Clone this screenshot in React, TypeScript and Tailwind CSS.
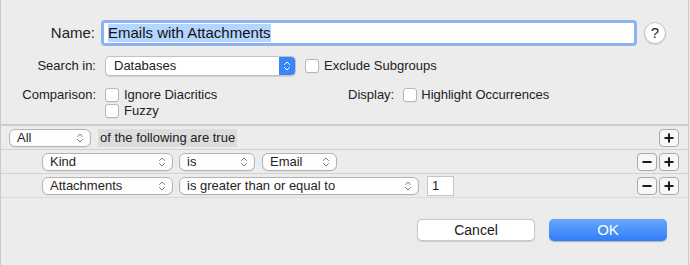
import React from 'react'

const font = "font-['Liberation_Sans',Arial,sans-serif]"

function UpDown({ color = '#7a7a7a' }: { color?: string }) {
  return (
    <svg width="8" height="12" viewBox="0 0 8 12" fill="none">
      <path d="M1.5 4.5 L4 2 L6.5 4.5" stroke={color} strokeWidth="1" strokeLinecap="round" strokeLinejoin="round" />
      <path d="M1.5 7.5 L4 10 L6.5 7.5" stroke={color} strokeWidth="1" strokeLinecap="round" strokeLinejoin="round" />
    </svg>
  )
}

function Popup({ label, className }: { label: string; className: string }) {
  return (
    <div
      className={`flex h-[18px] items-center justify-between rounded-[6px] border border-[#b3b3b3] bg-[#fdfdfd] pl-[7px] pr-[6px] text-[13px] leading-none text-[#1f1f1f] shadow-[0_0.5px_0.5px_rgba(0,0,0,0.1)] ${className}`}
    >
      <span>{label}</span>
      <UpDown />
    </div>
  )
}

function Checkbox() {
  return (
    <div className="h-[14px] w-[14px] shrink-0 rounded-[3px] border border-[#b8b8b8] bg-white shadow-[0_0.5px_0.5px_rgba(0,0,0,0.08)]" />
  )
}

function SquareButton({ kind }: { kind: 'plus' | 'minus' }) {
  return (
    <div className="flex h-[18px] w-[20px] items-center justify-center rounded-[4px] border border-[#a9a9a9] bg-[#f7f7f7]">
      <svg width="10" height="10" viewBox="0 0 10 10">
        <rect x="0.5" y="4" width="9" height="2" fill="#1a1a1a" />
        {kind === 'plus' && <rect x="4" y="0.5" width="2" height="9" fill="#1a1a1a" />}
      </svg>
    </div>
  )
}

export default function App() {
  return (
    <div className={`${font} h-[265px] w-[690px] overflow-hidden bg-[#ececec] text-[#222]`}>
      <div className="flex h-full w-[689px] flex-col border-x border-[#c9c9c9]">
        {/* Name */}
        <div className="mt-[20px] flex h-[26px] items-center">
          <div className="w-[95px] pr-[1px] text-right text-[15px]">Name:</div>
          <div className="ml-[5px] flex h-[26px] w-[536px] items-center rounded-[4px] border-[3px] border-[#8db2f2] bg-white pl-[4px]">
            <span className="bg-[#b4d5fe] text-[15px] leading-[18px] text-[#111]">Emails with Attachments</span>
          </div>
          <div className="ml-[7px] flex h-[22px] w-[22px] items-center justify-center rounded-full border border-[#c4c4c4] bg-white text-[15px] text-[#222] shadow-[0_1px_1px_rgba(0,0,0,0.12)]">
            ?
          </div>
        </div>

        {/* Search in */}
        <div className="mt-[10px] flex h-[20px] items-center text-[13px]">
          <div className="w-[95px] text-right">Search in:</div>
          <div className="ml-[9px] flex h-[20px] w-[191px] items-center justify-between overflow-hidden rounded-[5px] border border-[#c2c2c2] bg-white shadow-[0_0.5px_1px_rgba(0,0,0,0.12)]">
            <span className="pl-[8px]">Databases</span>
            <div className="flex h-full w-[16px] items-center justify-center bg-[#3a86f7]">
              <UpDown color="#ffffff" />
            </div>
          </div>
          <div className="ml-[9px]">
            <Checkbox />
          </div>
          <span className="ml-[5px]">Exclude Subgroups</span>
        </div>

        {/* Comparison / Display */}
        <div className="mt-[11px] flex text-[13px]">
          <div className="flex h-[16px] w-[95px] items-center justify-end">Comparison:</div>
          <div className="ml-[9px] flex w-[243px] flex-col">
            <div className="flex h-[16px] items-center">
              <Checkbox />
              <span className="ml-[5px]">Ignore Diacritics</span>
            </div>
            <div className="flex h-[15px] items-center">
              <Checkbox />
              <span className="ml-[5px]">Fuzzy</span>
            </div>
          </div>
          <div className="flex h-[16px] items-center">
            <span>Display:</span>
            <div className="ml-[9px]">
              <Checkbox />
            </div>
            <span className="ml-[4px]">Highlight Occurrences</span>
          </div>
        </div>

        {/* Predicate editor */}
        <div className="mt-[6px] border-t-2 border-[#cdcdcd] text-[13px]">
          <div className="flex h-[24px] items-center border-b border-[#d2d2d2] pl-[8px] pr-[9px]">
            <Popup label="All" className="w-[82px]" />
            <span className="ml-[7px] flex h-[18px] items-center bg-[#dcdcdc] px-[2px]">of the following are true</span>
            <div className="ml-auto">
              <SquareButton kind="plus" />
            </div>
          </div>
          <div className="flex h-[24px] items-center border-b border-[#d2d2d2] pl-[41px] pr-[9px]">
            <Popup label="Kind" className="w-[131px]" />
            <Popup label="is" className="ml-[6px] w-[76px]" />
            <Popup label="Email" className="ml-[7px] w-[75px]" />
            <div className="ml-auto flex gap-[2px]">
              <SquareButton kind="minus" />
              <SquareButton kind="plus" />
            </div>
          </div>
          <div className="flex h-[24px] items-center border-b border-[#dadada] pl-[41px] pr-[9px]">
            <Popup label="Attachments" className="w-[131px]" />
            <Popup label="is greater than or equal to" className="ml-[6px] w-[240px]" />
            <div className="ml-[8px] flex h-[20px] w-[27px] items-center border border-[#c6c6c6] bg-white pl-[4px]">1</div>
            <div className="ml-auto flex gap-[2px]">
              <SquareButton kind="minus" />
              <SquareButton kind="plus" />
            </div>
          </div>
        </div>

        {/* Buttons */}
        <div className="mt-[21px] flex pl-[416px] text-[14px]">
          <div className="flex h-[22px] w-[118px] items-center justify-center rounded-[5px] border border-[#c8c8c8] bg-white text-[#1a1a1a] shadow-[0_0.5px_1px_rgba(0,0,0,0.15)]">
            Cancel
          </div>
          <div className="ml-[14px] flex h-[22px] w-[118px] items-center justify-center rounded-[5px] bg-gradient-to-b from-[#68a7fb] to-[#2e7cf6] text-[15px] text-white shadow-[0_0.5px_1px_rgba(0,0,0,0.25)]">
            OK
          </div>
        </div>
      </div>
    </div>
  )
}
